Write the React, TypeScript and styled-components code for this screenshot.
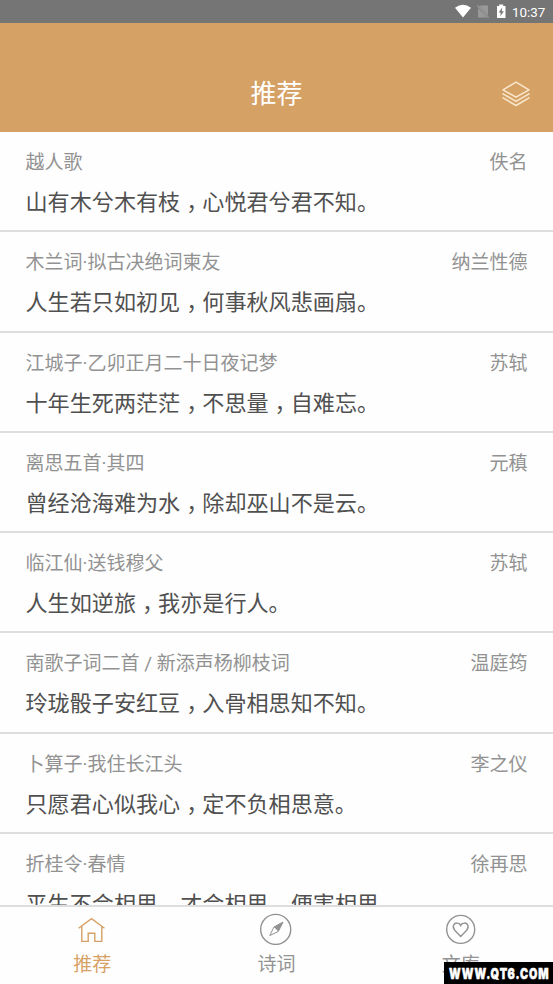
import React from 'react';
import styled, { createGlobalStyle } from 'styled-components';

const GlobalStyle = createGlobalStyle`
  body {
    margin: 0;
    background: #fefefe;
    font-family: Roboto, "Noto Sans CJK SC", sans-serif;
  }
`;

const Screen = styled.div`
  position: relative;
  display: flex;
  flex-direction: column;
  width: 553px;
  height: 984px;
  overflow: hidden;
  background: #fefefe;
`;

const StatusBar = styled.div`
  flex: none;
  display: flex;
  align-items: center;
  height: 23px;
  box-sizing: border-box;
  padding-left: 455px;
  background: #757575;
`;

const Clock = styled.span`
  margin-left: 5px;
  padding-top: 1px;
  font-size: 13.4px;
  line-height: 23px;
  font-weight: 400;
  color: #fff;
`;

const Header = styled.header`
  flex: none;
  display: grid;
  grid-template-columns: 1fr auto 1fr;
  align-items: center;
  height: 109px;
  box-sizing: border-box;
  padding: 32px 23px 0;
  background: #d6a165;
`;

const HeaderTitle = styled.h1`
  grid-column: 2;
  margin: 0;
  font-size: 26px;
  line-height: 36px;
  font-weight: 400;
  color: #fff;
`;

const HeaderAction = styled.div`
  display: flex;
  justify-content: flex-end;
`;

const List = styled.main`
  flex: 1;
  min-height: 0;
  overflow: hidden;
`;

const Row = styled.article`
  height: 100.25px;
  box-sizing: border-box;
  padding: 17px 25.5px 0 25.5px;
  border-bottom: 2px solid #dedede;
`;

const Meta = styled.div`
  display: flex;
  justify-content: space-between;
  font-size: 19px;
  line-height: 28px;
  color: #929292;
`;

const Verse = styled.p`
  margin: 9px 0 0;
  font-size: 22.1px;
  line-height: 32px;
  color: #505050;
  white-space: nowrap;
`;

const Comma = styled.span`
  display: inline-block;
  transform: translateX(6px);
`;

const TabBar = styled.nav`
  flex: none;
  display: grid;
  grid-template-columns: repeat(3, 1fr);
  height: 79px;
  box-sizing: border-box;
  border-top: 2px solid #dedede;
  background: #fefefe;
`;

const Tab = styled.div<{ $active?: boolean }>`
  display: flex;
  flex-direction: column;
  align-items: center;
  padding-top: 6px;
  font-size: 19px;
  line-height: 28px;
  color: ${({ $active }) => ($active ? '#d6a165' : '#929292')};
`;

const TabIcon = styled.svg`
  display: block;
  margin-bottom: 6px;
  fill: none;
  stroke: currentColor;
  stroke-width: 1.4;
`;

const Watermark = styled.div`
  position: absolute;
  right: 0;
  bottom: 0;
  display: flex;
  align-items: center;
  width: 109px;
  height: 22px;
  box-sizing: border-box;
  padding-left: 5px;
  background: #000;
`;

const WatermarkText = styled.span`
  flex: none;
  font-family: Inter, sans-serif;
  font-size: 15px;
  line-height: 24px;
  padding-top: 2px;
  font-weight: 900;
  letter-spacing: 1.25px;
  color: #fff;
  -webkit-text-stroke: 0.5px #fff;
  transform: scaleX(0.72);
  transform-origin: left;
`;

const poems = [
  { title: '越人歌', author: '佚名', verse: '山有木兮木有枝，心悦君兮君不知。' },
  { title: '木兰词·拟古决绝词柬友', author: '纳兰性德', verse: '人生若只如初见，何事秋风悲画扇。' },
  { title: '江城子·乙卯正月二十日夜记梦', author: '苏轼', verse: '十年生死两茫茫，不思量，自难忘。' },
  { title: '离思五首·其四', author: '元稹', verse: '曾经沧海难为水，除却巫山不是云。' },
  { title: '临江仙·送钱穆父', author: '苏轼', verse: '人生如逆旅，我亦是行人。' },
  { title: '南歌子词二首 / 新添声杨柳枝词', author: '温庭筠', verse: '玲珑骰子安红豆，入骨相思知不知。' },
  { title: '卜算子·我住长江头', author: '李之仪', verse: '只愿君心似我心，定不负相思意。' },
  { title: '折桂令·春情', author: '徐再思', verse: '平生不会相思，才会相思，便害相思' },
];

// Sets each comma in the middle of its cell.
const VerseText = ({ text }: { text: string }) => (
  <Verse>
    {text.split('，').map((part, i) => (
      <React.Fragment key={i}>
        {i > 0 && <Comma>，</Comma>}
        {part}
      </React.Fragment>
    ))}
  </Verse>
);

const StatusIcons = () => (
  <svg width="52" height="23" viewBox="0 0 52 23">
    <path d="M0 7.8Q8 1.8 16 7.8L8 17.5Z" fill="#fff" />
    <path d="M25.5 5.5H33V15.5L24.5 6.5Z" fill="#999" />
    <path d="M23 8V17.5H32Z" fill="#999" />
    <path d="M22.5 5.5L33.5 17.8" stroke="#999" strokeWidth="1.3" />
    <path d="M42 6H44.2V4.5H48.2V6H50.5V18H42Z" fill="#fff" />
    <path d="M47.3 7.5L43.7 12.4H45.8L45.2 16.3L48.9 11.3H46.7Z" fill="#757575" />
  </svg>
);

const LayersIcon = () => (
  <svg width="28" height="26" viewBox="0 0 28 26" fill="none" stroke="#fae8ce" strokeWidth="1.5" strokeLinejoin="round" strokeLinecap="round">
    <path d="M14 1.2L27 8.8L14 16.2L1 8.8Z" />
    <path d="M1 12.8L14 20.4L27 12.8" />
    <path d="M1 16.8L14 24.5L27 16.8" />
  </svg>
);

const App = () => (
  <>
    <GlobalStyle />
    <Screen>
      <StatusBar>
        <StatusIcons />
        <Clock>10:37</Clock>
      </StatusBar>
      <Header>
        <HeaderTitle>推荐</HeaderTitle>
        <HeaderAction><LayersIcon /></HeaderAction>
      </Header>
      <List>
        {poems.map((poem) => (
          <Row key={poem.title}>
            <Meta>
              <span>{poem.title}</span>
              <span>{poem.author}</span>
            </Meta>
            <VerseText text={poem.verse} />
          </Row>
        ))}
      </List>
      <TabBar>
        <Tab $active>
          <TabIcon width="32" height="32" viewBox="0 0 32 32">
            <path d="M2.6 15.2L15.5 5.6L28.5 15.2M5.8 13.2V28.4H12.2V20.3H18.8V28.4H25.8V13.2" />
          </TabIcon>
          推荐
        </Tab>
        <Tab>
          <TabIcon width="32" height="32" viewBox="0 0 32 32">
            <circle cx="15.7" cy="16.4" r="15" />
            <path d="M23.3 8.8L18.3 18.5L13.9 14Z" fill="currentColor" stroke="none" />
            <path d="M23 9.1L13.9 14L9.8 22.5L18.3 18.5Z" strokeWidth="1" />
          </TabIcon>
          诗词
        </Tab>
        <Tab>
          <TabIcon width="32" height="32" viewBox="0 0 32 32">
            <circle cx="15.7" cy="16.4" r="14" />
            <path d="M15.7 23.5L9.7 17.2C6.6 13.4 9.2 9.7 12.1 10C14 10.1 15.1 11.1 15.7 12.5C16.3 11.1 17.4 10.1 19.3 10C22.2 9.7 24.8 13.4 21.7 17.2Z" />
          </TabIcon>
          文库
        </Tab>
      </TabBar>
      <Watermark><WatermarkText>WWW.QT6.COM</WatermarkText></Watermark>
    </Screen>
  </>
);

export default App;
